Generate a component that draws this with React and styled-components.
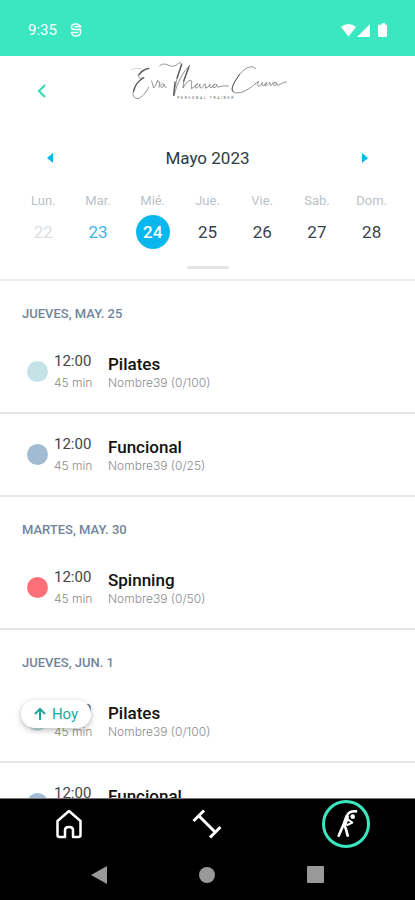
import React from "react"
import styled, { createGlobalStyle } from "styled-components"

const mint = "#3ae7c0"
const blue = "#08b7ee"

const GlobalStyle = createGlobalStyle`
  * {
    box-sizing: border-box;
  }

  body {
    margin: 0;
    background: #fff;
    color: #333;
    font-family: Roboto, "Liberation Sans", sans-serif;
  }

  button {
    padding: 0;
    border: 0;
    background: none;
    font: inherit;
    cursor: pointer;
  }
`

const Screen = styled.div`
  position: relative;
  display: flex;
  flex-direction: column;
  height: 100vh;
  overflow: hidden;
`

const StatusBar = styled.div`
  display: flex;
  flex: none;
  align-items: center;
  justify-content: space-between;
  height: 56px;
  padding: 4px 28px 0;
  background: ${mint};
  color: #fff;
  font-size: 15px;
`

const StatusGroup = styled.div`
  display: flex;
  align-items: center;
  gap: 13px;
`

const Header = styled.header`
  display: grid;
  flex: none;
  grid-template-columns: 60px 1fr 60px;
  align-items: center;
  height: 70px;
`

const BackButton = styled.button`
  display: flex;
  justify-content: flex-end;
  padding-right: 12px;
  height: 40px;
  align-items: center;
`

const Logo = styled.svg`
  align-self: start;
  justify-self: center;
  margin-top: 4px;
`

const Calendar = styled.section`
  flex: none;
  padding-bottom: 10px;
  border-bottom: 2px solid #ebebeb;
`

const MonthBar = styled.div`
  display: flex;
  align-items: center;
  justify-content: space-between;
  height: 64px;
  padding: 0 36px;
`

const Month = styled.h1`
  margin: 0;
  color: #2d3a44;
  font-size: 17px;
  font-weight: 400;
`

const MonthButton = styled.button`
  display: flex;
  align-items: center;
  justify-content: center;
  width: 28px;
  height: 28px;
`

const Week = styled.div`
  display: grid;
  grid-template-columns: repeat(7, 1fr);
  padding: 0 16px;
`

const DayColumn = styled.div`
  display: flex;
  flex-direction: column;
  align-items: center;
  gap: 3px;
`

const DayName = styled.span`
  color: #bac2c9;
  font-size: 13px;
  line-height: 22px;
`

const dayColors = {
  past: "#dadfe3",
  today: "#3fb2ea",
  selected: "#fff",
  next: "#36424c",
}

const DayButton = styled.button`
  width: 34px;
  height: 34px;
  border-radius: 50%;
  background: ${p => (p.$state === "selected" ? blue : "none")};
  color: ${p => dayColors[p.$state]};
  font-size: 17px;
  font-weight: ${p => (p.$state === "selected" ? 500 : 400)};
`

const Handle = styled.div`
  width: 42px;
  height: 3px;
  margin: 17px auto 0;
  border-radius: 2px;
  background: #e0e4e7;
`

const Agenda = styled.main`
  flex: 1;
  min-height: 0;
  overflow-y: auto;
  scrollbar-width: none;
`

const DateHeading = styled.h2`
  margin: 0;
  padding: 24px 22px 8px;
  color: #71859a;
  font-size: 13px;
  font-weight: 500;
  line-height: 18px;
`

const ClassRow = styled.article`
  display: grid;
  grid-template-columns: 21px 48px 1fr;
  column-gap: 6px;
  height: 83px;
  padding-left: 27px;
  border-bottom: 2px solid #e6e6e6;
`

const Dot = styled.span`
  align-self: center;
  width: 21px;
  height: 21px;
  border-radius: 50%;
  background: ${p => p.$color};
`

const TimeColumn = styled.div`
  padding-top: 19px;
`

const Time = styled.div`
  color: #444;
  font-size: 15px;
  line-height: 22px;
`

const InfoColumn = styled.div`
  padding-top: 23px;
`

const ClassName = styled.h3`
  margin: 0;
  color: #111;
  font-size: 17px;
  font-weight: 500;
  line-height: 20px;
`

const Detail = styled.div`
  color: #8c8c8c;
  font-family: Inter, Roboto, sans-serif;
  font-size: 12px;
  font-weight: 300;
  line-height: ${p => p.$line}px;
`

const TodayButton = styled.button`
  position: absolute;
  bottom: 172px;
  left: 21px;
  display: flex;
  align-items: center;
  justify-content: center;
  gap: 6px;
  width: 70px;
  height: 28px;
  border-radius: 14px;
  background: #fff;
  box-shadow: 0 2px 6px rgba(0, 0, 0, 0.28);
  color: #1fa79b;
  font-size: 15px;
`

const Footer = styled.footer`
  flex: none;
  border-top: 1px solid #777;
  background: #000;
`

const Tabs = styled.nav`
  display: grid;
  grid-template-columns: repeat(3, 1fr);
  place-items: center;
  height: 50px;
`

const Tab = styled.a`
  display: flex;
  align-items: center;
  justify-content: center;
  width: 48px;
  height: 48px;
  border: 3px solid ${p => (p.$active ? mint : "transparent")};
  border-radius: 50%;
  color: #fff;
`

const SystemBar = styled.div`
  display: grid;
  grid-template-columns: repeat(3, 1fr);
  place-items: center;
  height: 51px;
  padding: 0 45px;
`

const SystemButton = styled.button`
  display: flex;
  color: #999;
`

const week = [
  { name: "Lun.", day: 22, state: "past" },
  { name: "Mar.", day: 23, state: "today" },
  { name: "Mié.", day: 24, state: "selected" },
  { name: "Jue.", day: 25, state: "next" },
  { name: "Vie.", day: 26, state: "next" },
  { name: "Sab.", day: 27, state: "next" },
  { name: "Dom.", day: 28, state: "next" },
]

const pilates = { name: "Pilates", detail: "Nombre39 (0/100)", color: "#c5e2e7" }
const funcional = { name: "Funcional", detail: "Nombre39 (0/25)", color: "#a3bad3" }
const spinning = { name: "Spinning", detail: "Nombre39 (0/50)", color: "#fd7077" }

const agenda = [
  { date: "JUEVES, MAY. 25", classes: [pilates, funcional] },
  { date: "MARTES, MAY. 30", classes: [spinning] },
  { date: "JUEVES, JUN. 1", classes: [pilates, funcional] },
]

const Signature = () => (
  <Logo
    width="160"
    height="42"
    viewBox="384 180 480 126"
    role="img"
    aria-label="Eva Maria Cuevas"
    fill="none"
    stroke="#5c5c5c"
    strokeWidth="2"
    strokeLinecap="round"
    strokeLinejoin="round"
  >
    <path d="M395 208q14-6 27-2" stroke="#bbb" />
    <path d="M448 206c-8-3-30 8-33 20-2 9 9 10 18 7-16 4-31 24-34 46-1 17 13 20 23 13 10-7 17-17 24-30" />
    <path d="M446 205c-12 2-25 12-29 20M430 234c-14 8-26 24-29 40" strokeWidth="4" />
    <path d="M455 243l6 21c5-6 9-14 12-23 0 5 3 7 7 5l-3 16M492 253c-7-5-13 5-8 9 5 1 8-4 9-9 0 6 1 10 6 9" />
    <path d="M479 198c8-8 17-7 25-3 12 6 22 4 32-5 9-6 9 0 5 12-8 28-17 56-20 85" />
    <path d="M523 284c8-34 24-66 46-88-10 22-19 44-20 68 8-16 18-25 25-22 4 5-3 16 1 23" />
    <path d="M525 246l-4 40M545 194l-14 40M566 203l-15 40" strokeWidth="4" />
    <path d="M575 265c8-3 13-9 19-14-9 0-11 14-4 13 6-1 8-7 10-12-1 7-1 12 4 12 5-2 7-9 11-13 0 5 6 9 0 13l8-2c4-2 5-7 7-10-1 6-1 12 3 11 6-1 8-9 13-11-8 0-10 11-4 11 5 0 8-6 8-10-1 6 1 9 6 8 8-2 17-5 29-3" />
    <path d="M767 206c-8-14-34-2-48 17-14 20-29 42-20 52 14 11 45-3 66-23" />
    <path d="M719 223c-14 20-29 42-20 52" strokeWidth="3" />
    <path d="M765 252l11-8c-4 7-4 15 0 15 6-1 8-7 11-12-1 6-1 11 3 10 6-2 8-7 8-10 3-1 2 6-4 8 8 4 12-4 15-8l3 10c4-2 6-6 8-10 1-1 4 0 7 1-7-1-9 10-3 9 5-1 6-6 6-9 0 6 1 9 6 7 9-4 15-9 23-9" />
    <text
      x="532"
      y="298"
      fill="#555"
      stroke="none"
      fontFamily="Roboto, sans-serif"
      fontSize="10"
      letterSpacing="5"
    >
      PERSONAL TRAINER
    </text>
  </Logo>
)

const ShieldIcon = () => (
  <svg width="12" height="14" viewBox="0 0 12 14" fill="none" stroke="#fff" strokeWidth="1.500">
    <path d="M11 4Q10 1.500 6 1T1.500 4q0 2.500 2.500 2.500h6.500V10Q10 13 6 13T1.500 9.500H8M4.500 3.800H11" />
  </svg>
)

const StretchIcon = () => (
  <svg
    width="24"
    height="28"
    viewBox="72 59 72 84"
    fill="none"
    stroke="#fff"
    strokeWidth="8"
    strokeLinecap="round"
    strokeLinejoin="round"
  >
    <path d="M138 63c-14-1-24 4-28 15l-9 24-15 34" />
    <path d="M102 102l6 15 5 19" />
    <path d="M111 80l-7 22" strokeWidth="12" />
    <path d="M114 88l13 9-15 7" strokeWidth="6" />
    <circle cx="128" cy="79" r="7" fill="#fff" stroke="none" />
  </svg>
)

export default function App() {
  return (
    <Screen>
      <GlobalStyle />
      <StatusBar>
        <StatusGroup>
          <span>9:35</span>
          <ShieldIcon />
        </StatusGroup>
        <svg width="46" height="14" viewBox="0 0 46 14" fill="#fff">
          <path d="M0 4Q7.500-2 15 4L7.500 13.500zM29 1v13H16zM39 1.500h2V0h3v1.500h1Q46 1.500 46 3v9.500q0 1.500-1.500 1.500h-6Q37 14 37 12.500V3q0-1.500 2-1.500z" />
        </svg>
      </StatusBar>

      <Header>
        <BackButton aria-label="Volver">
          <svg width="12" height="16" viewBox="0 0 12 16" fill="none" stroke="#35d9b0" strokeWidth="2">
            <path d="M9 2L3 8l6 6" />
          </svg>
        </BackButton>
        <Signature />
      </Header>

      <Calendar>
        <MonthBar>
          <MonthButton aria-label="Mes anterior">
            <svg width="6" height="10" viewBox="0 0 6 10" fill={blue}>
              <path d="M6 0v10L0 5z" />
            </svg>
          </MonthButton>
          <Month>Mayo 2023</Month>
          <MonthButton aria-label="Mes siguiente">
            <svg width="6" height="10" viewBox="0 0 6 10" fill={blue}>
              <path d="M0 0v10l6-5z" />
            </svg>
          </MonthButton>
        </MonthBar>
        <Week>
          {week.map(({ name, day, state }) => (
            <DayColumn key={day}>
              <DayName>{name}</DayName>
              <DayButton $state={state}>{day}</DayButton>
            </DayColumn>
          ))}
        </Week>
        <Handle />
      </Calendar>

      <Agenda>
        {agenda.map(({ date, classes }) => (
          <section key={date}>
            <DateHeading>{date}</DateHeading>
            {classes.map(({ name, detail, color }) => (
              <ClassRow key={name}>
                <Dot $color={color} />
                <TimeColumn>
                  <Time>12:00</Time>
                  <Detail $line={22}>45 min</Detail>
                </TimeColumn>
                <InfoColumn>
                  <ClassName>{name}</ClassName>
                  <Detail $line={18}>{detail}</Detail>
                </InfoColumn>
              </ClassRow>
            ))}
          </section>
        ))}
      </Agenda>

      <TodayButton>
        <svg width="12" height="14" viewBox="0 0 12 14" fill="none" stroke="currentColor" strokeWidth="2">
          <path d="M6 13V2M1 7l5-5 5 5" />
        </svg>
        Hoy
      </TodayButton>

      <Footer>
        <Tabs>
          <Tab href="#inicio" aria-label="Inicio">
            <svg width="28" height="30" viewBox="0 0 28 30" fill="none" stroke="#fff" strokeWidth="2.500" strokeLinejoin="round">
              <path d="M14 2L2.500 12v14q0 2 2 2H10v-7q0-3 4-3t4 3v7h5.500q2 0 2-2V12z" />
            </svg>
          </Tab>
          <Tab href="#entrenos" aria-label="Entrenos">
            <svg width="30" height="30" viewBox="0 0 30 30" fill="none" stroke="#fff" strokeWidth="3">
              <path d="M1.500 12L12 1.500M18 28.500L28.500 18M7 7l16 16" />
            </svg>
          </Tab>
          <Tab href="#clases" aria-label="Clases" $active>
            <StretchIcon />
          </Tab>
        </Tabs>
        <SystemBar>
          <SystemButton aria-label="Atrás">
            <svg width="16" height="18" viewBox="0 0 16 18" fill="currentColor">
              <path d="M16 0v18L0 9z" />
            </svg>
          </SystemButton>
          <SystemButton aria-label="Pantalla principal">
            <svg width="16" height="16" viewBox="0 0 16 16" fill="currentColor">
              <circle cx="8" cy="8" r="8" />
            </svg>
          </SystemButton>
          <SystemButton aria-label="Recientes">
            <svg width="17" height="17" viewBox="0 0 17 17" fill="currentColor">
              <rect width="17" height="17" rx="1" />
            </svg>
          </SystemButton>
        </SystemBar>
      </Footer>
    </Screen>
  )
}
